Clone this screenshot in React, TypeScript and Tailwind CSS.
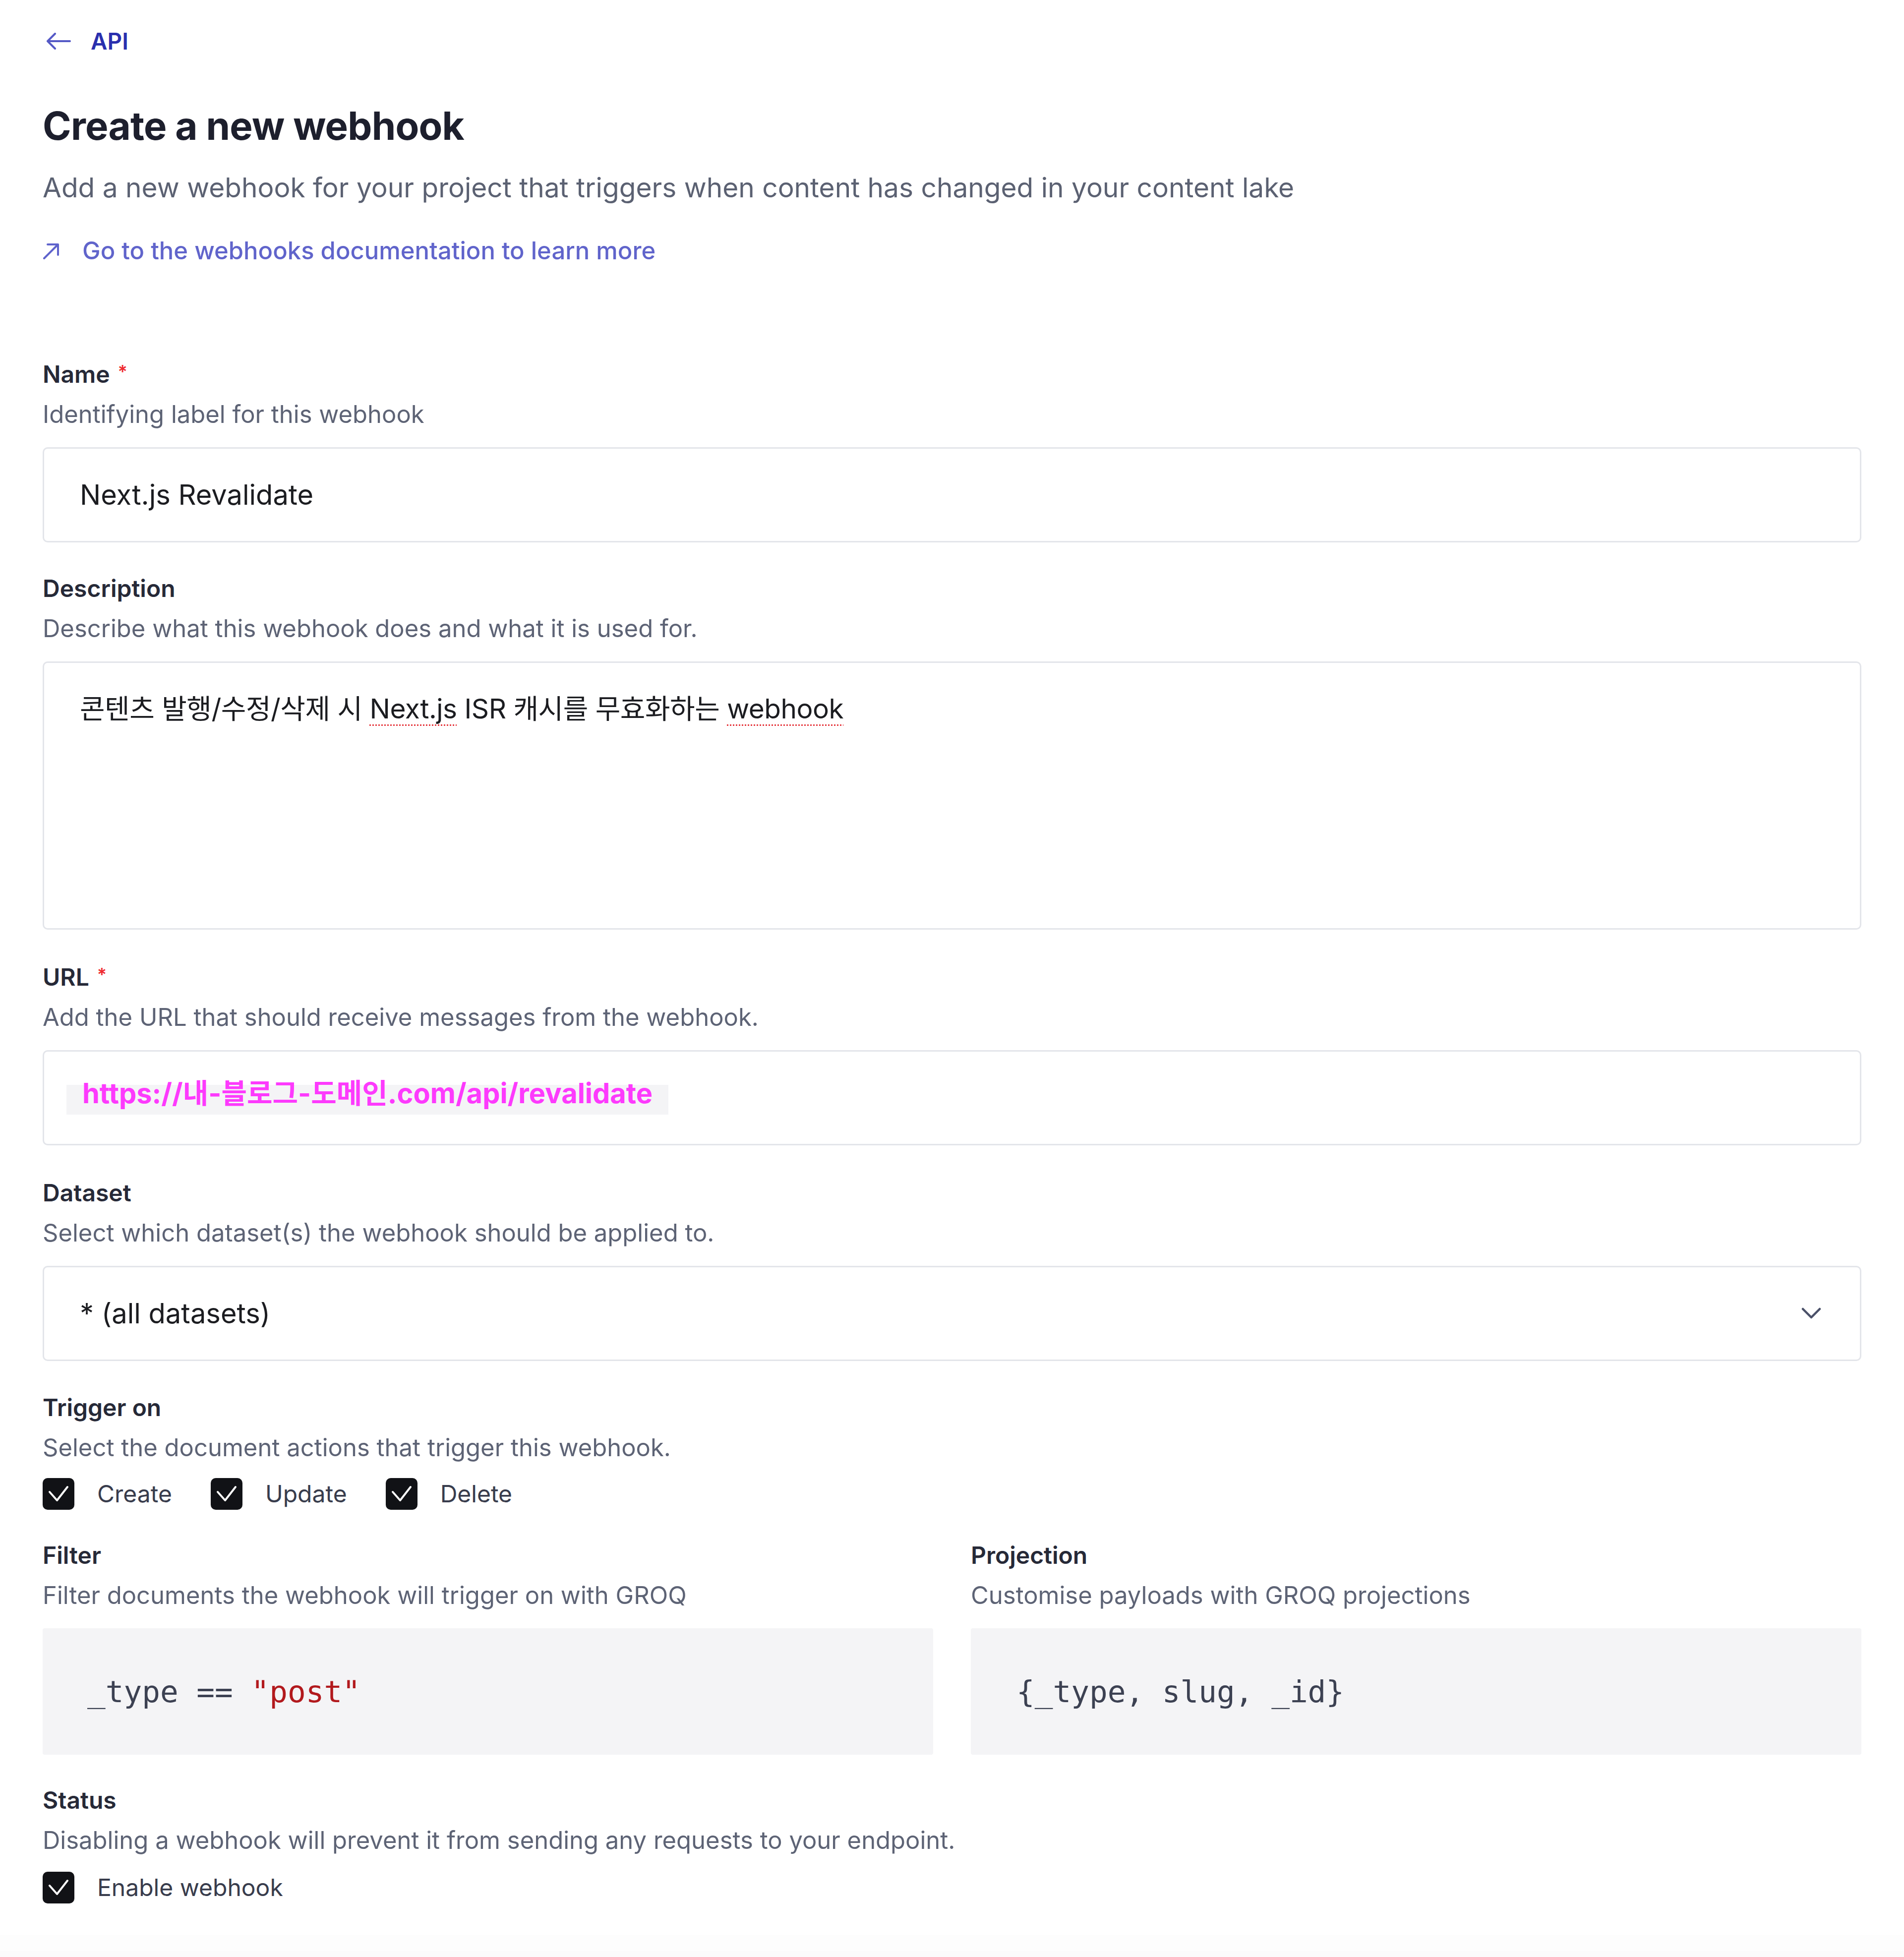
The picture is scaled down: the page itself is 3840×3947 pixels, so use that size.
import type { ReactNode } from "react";

const sans = "font-['Inter','Noto_Sans_CJK_KR',sans-serif]";

function CheckBox({ label }: { label: string }) {
  return (
    <label className="flex items-center gap-[46px]">
      <span className="flex h-[64px] w-[64px] items-center justify-center rounded-[10px] bg-[#111216]">
        <svg width="64" height="64" viewBox="0 0 64 64" fill="none">
          <path d="M14 28 L29 45 L50 18" stroke="#fff" strokeWidth="4" strokeLinecap="round" strokeLinejoin="round" />
        </svg>
      </span>
      <span className="text-[48px] leading-[64px] text-[#383c4c]">{label}</span>
    </label>
  );
}

function Field({
  label,
  hint,
  required,
  gap = "mt-[38px]",
  className = "",
  children,
}: {
  label: string;
  hint: string;
  required?: boolean;
  gap?: string;
  className?: string;
  children: ReactNode;
}) {
  return (
    <div className={className}>
      <div className="flex items-start text-[48px] font-semibold leading-[56px] text-[#262937]">
        {label}
        {required && <span className="ml-[16px] text-[36px] leading-[44px] text-[#ef2b2f]">*</span>}
      </div>
      <div className="mt-[25px] text-[49px] leading-[56px] text-[#5d6375]">{hint}</div>
      <div className={gap}>{children}</div>
    </div>
  );
}

const box = "rounded-[10px] border-[3px] border-[#e3e5ea] bg-white";
const spell = "underline decoration-[#e5393f] decoration-dotted decoration-3 underline-offset-[12px]";

export default function App() {
  return (
    <div className={`${sans} flex min-h-[3947px] flex-col bg-white`}>
      <div className="px-[86px] pt-[59px]">
        {/* back link */}
        <a className="flex h-[48px] items-center gap-[40px] pl-[7px]">
          <svg width="50" height="34" viewBox="0 0 50 34" fill="none">
            <path d="M48 17 H3 M18 2 L3 17 L18 32" stroke="#5559c6" strokeWidth="4" strokeLinecap="round" strokeLinejoin="round" />
          </svg>
          <span className="text-[46px] font-semibold leading-[48px] text-[#2a2fae]">API</span>
        </a>

        <h1 className="mt-[107px] text-[78px] font-bold leading-[80px] tracking-[-0.01em] text-[#1d1f2d]">
          Create a new webhook
        </h1>
        <p className="mt-[54px] text-[55px] leading-[60px] text-[#5b6172]">
          Add a new webhook for your project that triggers when content has changed in your content lake
        </p>
        <a className="mt-[70px] flex h-[56px] items-center gap-[46px]">
          <svg width="34" height="36" viewBox="0 0 34 36" fill="none">
            <path d="M3 33 L30 6 M10 5 H31 V26" stroke="#5f63cc" strokeWidth="4" strokeLinecap="round" strokeLinejoin="round" />
          </svg>
          <span className="text-[49px] font-medium leading-[56px] text-[#6064cb]">
            Go to the webhooks documentation to learn more
          </span>
        </a>

        <Field className="mt-[193px]" label="Name" hint="Identifying label for this webhook" required>
          <div className={`${box} flex h-[192px] items-center px-[72px] text-[56px] text-[#1b1c20]`}>
            Next.js Revalidate
          </div>
        </Field>

        <Field className="mt-[65px]" label="Description" hint="Describe what this webhook does and what it is used for.">
          <div className={`${box} h-[541px] px-[72px] pt-[60px] text-[55px] leading-[64px] tracking-[-0.5px] text-[#1b1c20]`}>
            콘텐츠 발행/수정/삭제 시 <span className={spell}>Next.js</span> ISR 캐시를 무효화하는{" "}
            <span className={spell}>webhook</span>
          </div>
        </Field>

        <Field className="mt-[68px]" label="URL" hint="Add the URL that should receive messages from the webhook." required>
          <div className={`${box} h-[192px] pl-[45px] pt-[41px]`}>
            <span className="inline-block bg-[linear-gradient(to_bottom,transparent_30%,#f4f4f6_30%)] px-[32px] text-[56px] font-bold leading-[86px] text-[#fd3afd]">
              https://내-블로그-도메인.com/api/revalidate
            </span>
          </div>
        </Field>

        <Field className="mt-[68px]" label="Dataset" hint="Select which dataset(s) the webhook should be applied to.">
          <div className={`${box} flex h-[192px] items-center justify-between pl-[72px] pr-[78px] text-[56px] text-[#1b1c20]`}>
            <span>* (all datasets)</span>
            <svg width="40" height="24" viewBox="0 0 40 24" fill="none">
              <path d="M3 3 L20 20 L37 3" stroke="#4a5068" strokeWidth="4.5" strokeLinecap="round" strokeLinejoin="round" />
            </svg>
          </div>
        </Field>

        <Field className="mt-[66px]" gap="mt-[33px]" label="Trigger on" hint="Select the document actions that trigger this webhook.">
          <div className="flex gap-[78px]">
            <CheckBox label="Create" />
            <CheckBox label="Update" />
            <CheckBox label="Delete" />
          </div>
        </Field>

        <div className="mt-[64px] grid grid-cols-2 gap-x-[76px]">
          <Field label="Filter" hint="Filter documents the webhook will trigger on with GROQ">
            <div className="flex h-[255px] items-center rounded-[4px] bg-[#f4f4f6] px-[90px] font-['DejaVu_Sans_Mono',monospace] text-[61px] text-[#3c4152]">
              _type ==&nbsp;<span className="text-[#b2191d]">"post"</span>
            </div>
          </Field>
          <Field label="Projection" hint="Customise payloads with GROQ projections">
            <div className="flex h-[255px] items-center rounded-[4px] bg-[#f4f4f6] px-[92px] font-['DejaVu_Sans_Mono',monospace] text-[61px] text-[#3c4152]">
              {"{_type, slug, _id}"}
            </div>
          </Field>
        </div>

        <Field
          className="mt-[64px]"
          gap="mt-[35px]"
          label="Status"
          hint="Disabling a webhook will prevent it from sending any requests to your endpoint."
        >
          <CheckBox label="Enable webhook" />
        </Field>
      </div>

      <div className="mt-auto h-[32px] bg-[#fdfdfd]" />
      <div className="h-[12px] bg-[#fbfbfb]" />
    </div>
  );
}
